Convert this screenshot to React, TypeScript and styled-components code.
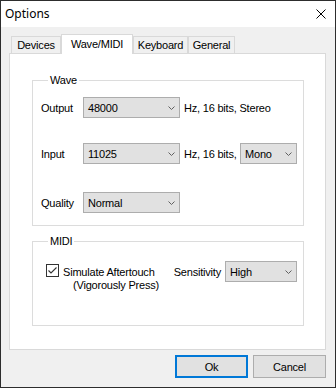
import React from "react";
import styled, { createGlobalStyle, css } from "styled-components";

const GlobalStyle = createGlobalStyle`
  html, body { margin: 0; padding: 0; background: #ffffff; }
  body {
    font-family: "Liberation Sans", Arial, sans-serif;
    font-size: 11px;
    letter-spacing: -0.2px;
    color: #000;
  }
  * { box-sizing: border-box; }
`;

const Window = styled.div`
  width: 336px;
  height: 388px;
  border: 1px solid #2d2d2d;
  background: #f0f0f0;
  display: flex;
  flex-direction: column;
`;

const TitleBar = styled.div`
  height: 26px;
  flex: 0 0 26px;
  background: #ffffff;
  display: flex;
  align-items: center;
  justify-content: space-between;
  padding: 0 9px 0 4px;
`;

const Title = styled.span`
  font-family: "Noto Sans", "Liberation Sans", sans-serif;
  font-size: 12px;
  letter-spacing: 0;
  line-height: 16px;
  padding-bottom: 1px;
`;

const Body = styled.div`
  flex: 1;
  display: flex;
  flex-direction: column;
  padding: 7px 9px 0 8px;
`;

const TabStrip = styled.div`
  display: flex;
  align-items: flex-end;
  height: 19px;
  padding-left: 2px;
`;

const Tab = styled.div<{ $w: number; $active?: boolean }>`
  width: ${(p) => p.$w}px;
  height: 17px;
  border: 1px solid #d9d9d9;
  border-bottom: none;
  background: #f0f0f0;
  display: flex;
  align-items: center;
  justify-content: center;
  line-height: 13px;
  ${(p) =>
    p.$active &&
    css`
      height: 20px;
      margin-bottom: -1px;
      background: #ffffff;
      position: relative;
      z-index: 1;
      padding-bottom: 1px;
    `}
`;

const Panel = styled.div`
  height: 297px;
  flex: 0 0 297px;
  background: #ffffff;
  border: 1px solid #d9d9d9;
  display: flex;
  flex-direction: column;
  padding: 20px 21px 0 22px;
`;

const Group = styled.fieldset<{ $gap?: number; $pb: number }>`
  margin: ${(p) => p.$gap ?? 0}px 0 0 0;
  min-inline-size: 0;
  border: 1px solid #dcdcdc;
  padding: 0 6px ${(p) => p.$pb}px 8px;
`;

const Legend = styled.legend`
  margin-left: 7px;
  padding: 0 2px;
  line-height: 13px;
  font-size: 11px;
`;

const Row = styled.div<{ $mt: number }>`
  display: flex;
  align-items: center;
  height: 21px;
  margin-top: ${(p) => p.$mt}px;
`;

const FieldLabel = styled.span`
  width: 42px;
  flex: 0 0 42px;
`;

const Suffix = styled.span`
  margin-left: 4px;
  white-space: nowrap;
`;

const ComboBox = styled.div<{ $w: number; $end?: boolean }>`
  width: ${(p) => p.$w}px;
  flex: 0 0 ${(p) => p.$w}px;
  height: 21px;
  margin-left: ${(p) => (p.$end ? "auto" : "0")};
  background: #e1e1e1;
  border: 1px solid #adadad;
  display: flex;
  align-items: center;
  justify-content: space-between;
  padding: 0 4px 0 4px;
`;

const Chevron = () => (
  <svg width="7" height="4" viewBox="0 0 7 4">
    <polyline points="0.5,0.5 3.5,3.5 6.5,0.5" fill="none" stroke="#606060" strokeWidth="1" />
  </svg>
);

const Combo: React.FC<{ w: number; value: string; end?: boolean }> = ({ w, value, end }) => (
  <ComboBox $w={w} $end={end}>
    <span>{value}</span>
    <Chevron />
  </ComboBox>
);

const MidiRow = styled.div`
  display: flex;
  align-items: flex-start;
  margin-top: 13px;
`;

const CheckWrap = styled.div`
  display: flex;
  align-items: flex-start;
  margin-left: 5px;
`;

const CheckBox = styled.div`
  width: 13px;
  height: 13px;
  margin-top: 3px;
  border: 1px solid #333333;
  background: #ffffff;
  display: flex;
  align-items: center;
  justify-content: center;
`;

const CheckText = styled.div`
  margin: 5px 0 0 4px;
  line-height: 13px;
`;

const Indent = styled.span`
  display: block;
  padding-left: 10px;
`;

const SensGroup = styled.div`
  margin-left: auto;
  display: flex;
  align-items: center;
  gap: 4px;
`;

const ButtonRow = styled.div`
  display: flex;
  justify-content: flex-end;
  gap: 5px;
  margin-top: 5px;
`;

const Button = styled.div<{ $primary?: boolean }>`
  width: 73px;
  height: 23px;
  background: #e1e1e1;
  border: ${(p) => (p.$primary ? "2px solid #0078d7" : "1px solid #adadad")};
  display: flex;
  align-items: center;
  justify-content: center;
`;

export default function App() {
  return (
    <>
      <GlobalStyle />
      <Window>
        <TitleBar>
          <Title>Options</Title>
          <svg width="10" height="10" viewBox="0 0 10 10">
            <path d="M0.5 0.5 L9.5 9.5 M9.5 0.5 L0.5 9.5" stroke="#000" strokeWidth="1" />
          </svg>
        </TitleBar>
        <Body>
          <TabStrip>
            <Tab $w={50}>Devices</Tab>
            <Tab $w={72} $active>
              Wave/MIDI
            </Tab>
            <Tab $w={55}>Keyboard</Tab>
            <Tab $w={47}>General</Tab>
          </TabStrip>
          <Panel>
            <Group $pb={12}>
              <Legend>Wave</Legend>
              <Row $mt={10}>
                <FieldLabel>Output</FieldLabel>
                <Combo w={97} value="48000" />
                <Suffix>Hz, 16 bits, Stereo</Suffix>
              </Row>
              <Row $mt={25}>
                <FieldLabel>Input</FieldLabel>
                <Combo w={97} value="11025" />
                <Suffix>Hz, 16 bits,</Suffix>
                <Combo w={57} value="Mono" end />
              </Row>
              <Row $mt={28}>
                <FieldLabel>Quality</FieldLabel>
                <Combo w={97} value="Normal" />
              </Row>
            </Group>
            <Group $gap={9} $pb={33}>
              <Legend>MIDI</Legend>
              <MidiRow>
                <CheckWrap>
                  <CheckBox>
                    <svg width="11" height="11" viewBox="0 0 11 11">
                      <polyline points="1.5,5.5 4,8 9.5,2.5" fill="none" stroke="#333" strokeWidth="1.1" />
                    </svg>
                  </CheckBox>
                  <CheckText>
                    Simulate Aftertouch
                    <Indent>(Vigorously Press)</Indent>
                  </CheckText>
                </CheckWrap>
                <SensGroup>
                  <span>Sensitivity</span>
                  <Combo w={72} value="High" />
                </SensGroup>
              </MidiRow>
            </Group>
          </Panel>
          <ButtonRow>
            <Button $primary>Ok</Button>
            <Button>Cancel</Button>
          </ButtonRow>
        </Body>
      </Window>
    </>
  );
}
